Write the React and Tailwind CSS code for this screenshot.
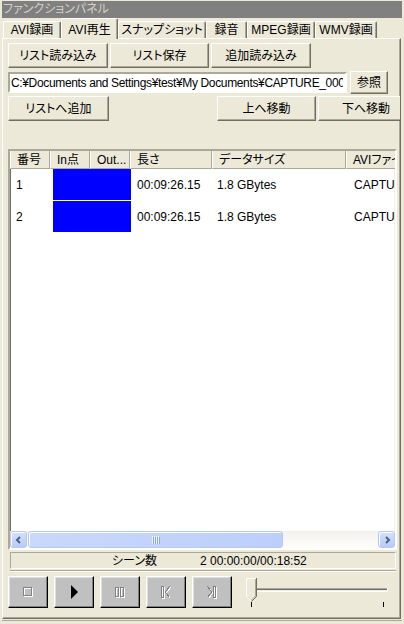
import React from "react";

const raised =
  "bg-[#ece9d8] border border-t-white border-l-white border-r-[#716f64] border-b-[#716f64] shadow-[inset_-1px_-1px_0_#aca899]";
const thinSunken =
  "border border-t-[#aca899] border-l-[#aca899] border-r-white border-b-white";
const deepSunken =
  "border-2 border-t-[#aca899] border-l-[#aca899] border-r-white border-b-white";
const playBtn =
  "w-[40px] h-[32px] flex items-center justify-center bg-[#c0c0c0] border border-t-white border-l-white border-r-black border-b-black shadow-[inset_-1px_-1px_0_#808080,inset_1px_1px_0_#dfdfdf]";

const Btn = ({ w, h = "h-[25px]", children, className = "" }) => (
  <div
    className={`${raised} ${w} ${h} flex items-center justify-center text-[12px] text-black whitespace-nowrap shrink-0 ${className}`}
  >
    {children}
  </div>
);

const Tab = ({ w, label, active }) =>
  active ? (
    <div
      className={`${w} h-[21px] -mb-[1px] relative z-10 bg-[#ece9d8] border-t border-l border-r border-t-white border-l-white border-r-[#716f64] shadow-[inset_-1px_0_0_#aca899] rounded-t-[2px] flex justify-center pt-[2px] text-[12px] whitespace-nowrap shrink-0`}
    >
      {label}
    </div>
  ) : (
    <div
      className={`${w} h-[17px] bg-[#ece9d8] border-t border-l border-r border-t-white border-l-white border-r-[#716f64] shadow-[inset_-1px_0_0_#aca899] rounded-t-[2px] flex justify-center items-center text-[12px] whitespace-nowrap shrink-0`}
    >
      {label}
    </div>
  );

const HeadCell = ({ w, children }) => (
  <div
    className={`${w} h-[18px] shrink-0 flex items-center pl-[6px] bg-[#ece9d8] border-l border-l-white border-r border-r-[#aca899] border-b border-b-[#aca899] whitespace-nowrap overflow-hidden`}
  >
    {children}
  </div>
);

const Row = ({ n }) => (
  <div className="flex h-[31px] mb-[1px] items-center text-[12px] whitespace-nowrap">
    <div className="w-[40px] pl-[6px] shrink-0">{n}</div>
    <div className="w-[80px] h-full shrink-0 pl-[3px]">
      <div className="w-[78px] h-[31px] bg-[#0000ff]" />
    </div>
    <div className="w-[82px] pl-[7px] shrink-0">00:09:26.15</div>
    <div className="w-[134px] pl-[5px] shrink-0">1.8 GBytes</div>
    <div className="pl-[8px]">CAPTU</div>
  </div>
);

const ScrollBtn = ({ dir }) => (
  <div className="w-[17px] h-[17px] shrink-0 rounded-[3px] border border-[#b4c8f6] bg-gradient-to-b from-[#d4e0fd] to-[#b8cbf8] shadow-[inset_1px_1px_0_#ffffff] flex items-center justify-center">
    <svg width="8" height="8" viewBox="0 0 8 8">
      {dir === "left" ? (
        <polyline points="5,1 2,4 5,7" fill="none" stroke="#4d6185" strokeWidth="2" />
      ) : (
        <polyline points="3,1 6,4 3,7" fill="none" stroke="#4d6185" strokeWidth="2" />
      )}
    </svg>
  </div>
);

const Emboss = ({ children }) => (
  <svg width="16" height="16" viewBox="0 0 16 16" shapeRendering="crispEdges">
    <g transform="translate(1,1)" stroke="#ffffff" fill="none">
      {children}
    </g>
    <g stroke="#808080" fill="none">
      {children}
    </g>
  </svg>
);

export default function App() {
  return (
    <div className="w-[404px] h-[624px] overflow-hidden bg-[#ece9d8] pt-[1px] pl-[2px] pr-[2px] pb-[3px] flex flex-col font-['Liberation_Sans','Noto_Sans_CJK_JP',sans-serif] [font-feature-settings:'palt'] text-black">
      <div className="h-[17px] shrink-0 bg-[#808080] text-[#d4d0c8] text-[12px] leading-[17px] pl-[1px]">
        ファンクションパネル
      </div>

      <div className="h-[20px] shrink-0 flex items-end pl-[1px]">
        <Tab w="w-[58px]" label="AVI録画" />
        <Tab w="w-[57px]" label="AVI再生" active />
        <Tab w="w-[88px]" label="スナップショット" />
        <Tab w="w-[41px]" label="録音" />
        <Tab w="w-[68px]" label="MPEG録画" />
        <Tab w="w-[62px]" label="WMV録画" />
      </div>

      <div className="flex-1 min-h-0 mr-[1px] flex flex-col overflow-hidden border border-t-white border-l-white border-r-[#716f64] border-b-[#716f64] shadow-[inset_-1px_-1px_0_#aca899] pl-[5px] pt-[4px]">
        <div className="flex">
          <Btn w="w-[100px]">リスト読み込み</Btn>
          <Btn w="w-[99px]" className="ml-[2px]">リスト保存</Btn>
          <Btn w="w-[100px]" className="ml-[2px]">追加読み込み</Btn>
        </div>

        <div className="flex mt-[3px] h-[23px] items-start">
          <div className={`${deepSunken} mt-[1px] w-[339px] h-[21px] shrink-0 bg-white flex items-center text-[12px] tracking-[-0.35px] whitespace-nowrap overflow-hidden pl-[1px]`}>
            <span className="block w-[332px] overflow-hidden">C:¥Documents and Settings¥test¥My Documents¥CAPTURE_000</span>
          </div>
          <Btn w="w-[38px]" h="h-[23px]" className="ml-[3px]">参照</Btn>
        </div>

        <div className="flex mt-[2px]">
          <Btn w="w-[101px]">リストへ追加</Btn>
          <Btn w="w-[99px]" className="ml-[108px]">上へ移動</Btn>
          <Btn w="w-[96px]" className="ml-[2px]">下へ移動</Btn>
        </div>

        <div className={`${deepSunken} shadow-[inset_1px_1px_0_#716f64,inset_-1px_-1px_0_#f1efe2] mt-[28px] w-[389px] h-[401px] shrink-0 bg-white flex flex-col overflow-hidden`}>
          <div className="flex text-[12px] p-0">
            <HeadCell w="w-[40px]">番号</HeadCell>
            <HeadCell w="w-[40px]">In点</HeadCell>
            <HeadCell w="w-[40px]">Out...</HeadCell>
            <HeadCell w="w-[82px]">長さ</HeadCell>
            <HeadCell w="w-[134px]">データサイズ</HeadCell>
            <HeadCell w="w-[60px]">AVIファイ</HeadCell>
          </div>
          <Row n="1" />
          <Row n="2" />
          <div className="flex-1" />
          <div className="h-[17px] shrink-0 flex bg-gradient-to-b from-[#f3f1ec] to-[#fefefb]">
            <ScrollBtn dir="left" />
            <div className="ml-[1px] w-[255px] h-[17px] shrink-0 rounded-[3px] border border-[#b4c8f6] bg-gradient-to-r from-[#c9d8fc] to-[#bccefa] shadow-[inset_1px_1px_0_#ffffff] flex items-center justify-center">
              <svg width="8" height="8" viewBox="0 0 8 8" shapeRendering="crispEdges">
                <rect x="0" y="0" width="1" height="8" fill="#eef4fe" />
                <rect x="2" y="0" width="1" height="8" fill="#eef4fe" />
                <rect x="4" y="0" width="1" height="8" fill="#eef4fe" />
                <rect x="6" y="0" width="1" height="8" fill="#eef4fe" />
                <rect x="1" y="1" width="1" height="8" fill="#8ca6e8" />
                <rect x="3" y="1" width="1" height="8" fill="#8ca6e8" />
                <rect x="5" y="1" width="1" height="8" fill="#8ca6e8" />
                <rect x="7" y="1" width="1" height="8" fill="#8ca6e8" />
              </svg>
            </div>
            <div className="flex-1" />
            <ScrollBtn dir="right" />
          </div>
        </div>

        <div className={`${thinSunken} mt-[2px] ml-[2px] w-[386px] h-[17px] shrink-0 flex items-center text-[12px] whitespace-nowrap`}>
          <span className="pl-[101px] w-[189px] shrink-0">シーン数</span>
          <span>2 00:00:00/00:18:52</span>
        </div>

        <div className="mt-[1px] ml-[2px] w-[386px] h-[2px] shrink-0 border-t border-t-[#aca899] border-b border-b-white" />

        <div className="flex items-start mt-[4px] gap-[6px]">
          <div className={playBtn}>
            <Emboss>
              <rect x="3.5" y="3.5" width="8" height="8" />
            </Emboss>
          </div>
          <div className={playBtn}>
            <svg width="16" height="16" viewBox="0 0 16 16">
              <polygon points="5,1 12,8 5,15" fill="#000000" />
            </svg>
          </div>
          <div className={playBtn}>
            <Emboss>
              <rect x="3.5" y="3.5" width="3" height="9" />
              <rect x="8.5" y="3.5" width="3" height="9" />
            </Emboss>
          </div>
          <div className={playBtn}>
            <Emboss>
              <rect x="3.5" y="2.5" width="2" height="11" />
              <polyline points="11.5,2.5 7.5,8 11.5,13.5" />
            </Emboss>
          </div>
          <div className={playBtn}>
            <Emboss>
              <polyline points="3.5,2.5 7.5,8 3.5,13.5" />
              <rect x="9.5" y="2.5" width="2" height="11" />
            </Emboss>
          </div>
          <svg className="ml-[8px] mt-[2px]" width="146" height="30" viewBox="0 0 146 30" shapeRendering="crispEdges">
            <rect x="4" y="10" width="138" height="1" fill="#aca899" />
            <rect x="4" y="11" width="138" height="1" fill="#716f64" />
            <rect x="4" y="12" width="138" height="1" fill="#f1efe2" />
            <rect x="4" y="13" width="138" height="1" fill="#ffffff" />
            <rect x="141" y="10" width="1" height="4" fill="#ffffff" />
            <polygon points="0,0 10,0 10,18 5,23 0,18" fill="#ece9d8" />
            <polyline points="0.5,18 0.5,0.5 10,0.5" fill="none" stroke="#ffffff" shapeRendering="auto" />
            <polyline points="10.5,0 10.5,18.5 5.5,23.5" fill="none" stroke="#716f64" shapeRendering="auto" />
            <polyline points="9.5,1 9.5,18 5,22.5" fill="none" stroke="#aca899" shapeRendering="auto" />
            <polyline points="0.5,18.5 5,23" fill="none" stroke="#ffffff" shapeRendering="auto" />
            <rect x="5" y="24" width="1" height="5" fill="#000000" />
            <rect x="137" y="24" width="1" height="5" fill="#000000" />
          </svg>
        </div>
      </div>
      <div className="h-[2px] shrink-0 border-b border-b-[#aca899]" />
    </div>
  );
}
